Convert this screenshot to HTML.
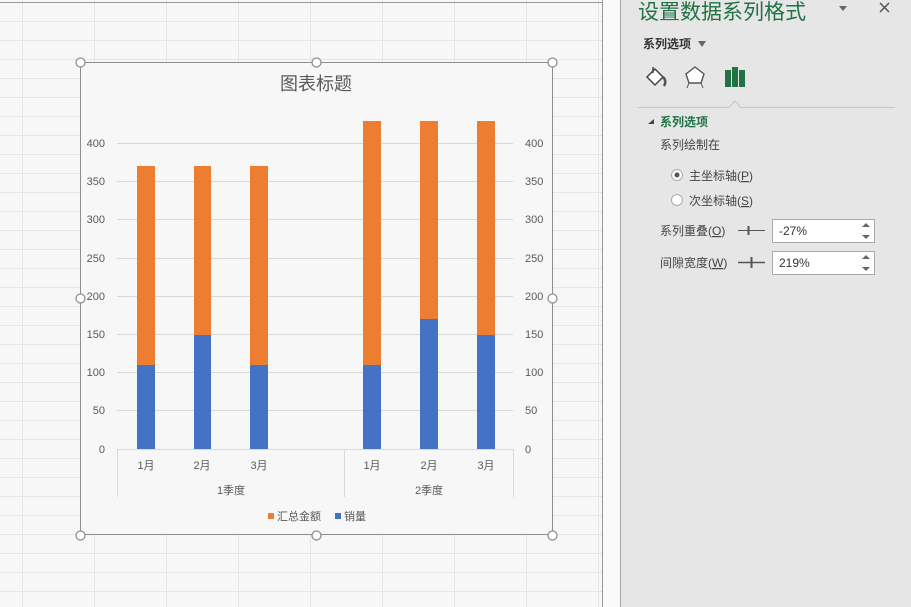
<!DOCTYPE html>
<html><head><meta charset="utf-8"><style>
body{margin:0;width:911px;height:607px;overflow:hidden;background:#f7f7f7;font-family:"Liberation Sans","Noto Sans CJK SC",sans-serif;position:relative}
.a{position:absolute;white-space:nowrap}
</style></head><body>
<svg class="a" style="left:0;top:0" width="911" height="607" xmlns="http://www.w3.org/2000/svg">
<defs><pattern id="g" width="72" height="19" patternUnits="userSpaceOnUse" x="22" y="2">
<path d="M0 0V19M0 0H72" stroke="#d4d4d4" stroke-width="1" fill="none"/></pattern></defs>
<rect x="0" y="0" width="603" height="607" fill="url(#g)"/>
<line x1="0" y1="2.5" x2="603" y2="2.5" stroke="#9a9a9a"/>
<rect x="603" y="0" width="18" height="607" fill="#fafafa"/>
<line x1="602.5" y1="0" x2="602.5" y2="607" stroke="#9a9a9a"/>
<line x1="620.5" y1="0" x2="620.5" y2="607" stroke="#a8a8a8"/>
<rect x="621" y="0" width="290" height="607" fill="#e6e6e6"/>
<rect x="80.5" y="62.5" width="472" height="472" fill="#f7f7f7" stroke="#8e8e8e"/>
<g stroke="#d9d9d9">
<line x1="117" x2="513" y1="143.5" y2="143.5"/><line x1="117" x2="513" y1="181.5" y2="181.5"/>
<line x1="117" x2="513" y1="219.5" y2="219.5"/><line x1="117" x2="513" y1="258.5" y2="258.5"/>
<line x1="117" x2="513" y1="296.5" y2="296.5"/><line x1="117" x2="513" y1="334.5" y2="334.5"/>
<line x1="117" x2="513" y1="372.5" y2="372.5"/><line x1="117" x2="513" y1="410.5" y2="410.5"/>
<line x1="117" x2="513" y1="449.5" y2="449.5"/>
<line x1="117.5" x2="117.5" y1="449" y2="497"/><line x1="344.5" x2="344.5" y1="449" y2="497"/><line x1="513.5" x2="513.5" y1="449" y2="497"/>
</g>
<g fill="#ed7d31">
<rect x="137" y="166" width="18" height="200"/><rect x="194" y="166" width="17" height="200"/><rect x="250" y="166" width="18" height="200"/>
<rect x="363" y="121" width="18" height="245"/><rect x="420" y="121" width="18" height="245"/><rect x="477" y="121" width="18" height="245"/>
</g>
<g fill="#4472c4">
<rect x="137" y="365" width="18" height="84"/><rect x="194" y="335" width="17" height="114"/><rect x="250" y="365" width="18" height="84"/>
<rect x="363" y="365" width="18" height="84"/><rect x="420" y="319" width="18" height="130"/><rect x="477" y="335" width="18" height="114"/>
</g>
<g fill="#fff" stroke="#8e8e8e" stroke-width="1.3">
<circle cx="80.5" cy="62.5" r="4.5"/><circle cx="316.5" cy="62.5" r="4.5"/><circle cx="552.5" cy="62.5" r="4.5"/>
<circle cx="80.5" cy="298.5" r="4.5"/><circle cx="552.5" cy="298.5" r="4.5"/>
<circle cx="80.5" cy="535.5" r="4.5"/><circle cx="316.5" cy="535.5" r="4.5"/><circle cx="552.5" cy="535.5" r="4.5"/>
</g>
<g font-family="Liberation Sans, Noto Sans CJK SC, sans-serif" font-size="11" fill="#595959">
<g text-anchor="end">
<text x="105" y="147">400</text><text x="105" y="185">350</text><text x="105" y="223">300</text><text x="105" y="262">250</text>
<text x="105" y="300">200</text><text x="105" y="338">150</text><text x="105" y="376">100</text><text x="105" y="414">50</text><text x="105" y="453">0</text>
</g>
<g>
<text x="525" y="147">400</text><text x="525" y="185">350</text><text x="525" y="223">300</text><text x="525" y="262">250</text>
<text x="525" y="300">200</text><text x="525" y="338">150</text><text x="525" y="376">100</text><text x="525" y="414">50</text><text x="525" y="453">0</text>
</g>
<g text-anchor="middle">
<text x="146" y="469">1月</text><text x="202" y="469">2月</text><text x="259" y="469">3月</text>
<text x="372" y="469">1月</text><text x="429" y="469">2月</text><text x="486" y="469">3月</text>
<text x="231" y="494">1季度</text><text x="429" y="494">2季度</text>
</g>
<rect x="268" y="513" width="6" height="6" fill="#ed7d31"/><text x="277" y="520">汇总金额</text>
<rect x="335" y="513" width="6" height="6" fill="#4472c4"/><text x="344" y="520">销量</text>
<text x="316" y="90" text-anchor="middle" font-size="18">图表标题</text>
</g>
<g transform="translate(645,65)" fill="none" stroke="#444" stroke-width="1.5">
<path d="M2 12 L10 4 L18 12 L10 20 Z" fill="#fff"/><path d="M8 2 L8 8"/>
<path d="M18 12 Q22 16 19 21" stroke="#555" stroke-width="2.5"/>
</g>
<g transform="translate(684,65)" fill="#fff" stroke="#555" stroke-width="1.4">
<path d="M11 2 L20 9 L17 18 L5 18 L2 9 Z"/>
<path d="M5 18 L3 23 M17 18 L19 23" stroke-width="1"/>
</g>
<g fill="#217346"><rect x="725" y="70" width="6" height="17"/><rect x="732" y="67" width="6" height="20"/><rect x="739" y="70" width="6" height="17"/></g>
<path d="M638 107.5 H729 L735 101 L741 107.5 H895" fill="none" stroke="#c6c6c6"/>
<path d="M648 124 L654 119 L654 124 Z" fill="#444"/>
<circle cx="677" cy="175" r="5.5" fill="#fff" stroke="#aaa"/><circle cx="677" cy="175" r="2.5" fill="#555"/>
<circle cx="677" cy="200" r="5.5" fill="#fff" stroke="#aaa"/>
<g stroke="#555"><line x1="738" y1="230.5" x2="765" y2="230.5"/><line x1="748.5" y1="226" x2="748.5" y2="235" stroke-width="2"/>
<line x1="738" y1="262.5" x2="765" y2="262.5" stroke-width="1.5"/><line x1="751.5" y1="257" x2="751.5" y2="268" stroke-width="2"/></g>
<rect x="772.5" y="219.5" width="102" height="23" fill="#fff" stroke="#aaa"/>
<rect x="772.5" y="251.5" width="102" height="23" fill="#fff" stroke="#aaa"/>
<g fill="#666"><path d="M862 227 L866 223 L870 227Z M862 235 L866 239 L870 235Z"/><path d="M862 259 L866 255 L870 259Z M862 267 L866 271 L870 267Z"/>
<path d="M839 6 L847 6 L843 11Z"/><path d="M698 41 L706 41 L702 47Z"/></g>
<path d="M880 3 L889 12 M889 3 L880 12" stroke="#555" stroke-width="1.5"/>
<g font-family="Liberation Sans, Noto Sans CJK SC, sans-serif" font-size="12" fill="#444">
<text x="638" y="19" font-size="21" fill="#217346">设置数据系列格式</text>
<text x="643" y="48" font-weight="bold" fill="#333">系列选项</text>
<text x="660" y="126" font-weight="bold" fill="#217346">系列选项</text>
<text x="660" y="149">系列绘制在</text>
<text x="689" y="180">主坐标轴(<tspan text-decoration="underline">P</tspan>)</text>
<text x="689" y="205">次坐标轴(<tspan text-decoration="underline">S</tspan>)</text>
<text x="660" y="235">系列重叠(<tspan text-decoration="underline">O</tspan>)</text>
<text x="660" y="267">间隙宽度(<tspan text-decoration="underline">W</tspan>)</text>
<text x="779" y="235" fill="#333">-27%</text>
<text x="779" y="267" fill="#333">219%</text>
</g>
</svg>
</body></html>
